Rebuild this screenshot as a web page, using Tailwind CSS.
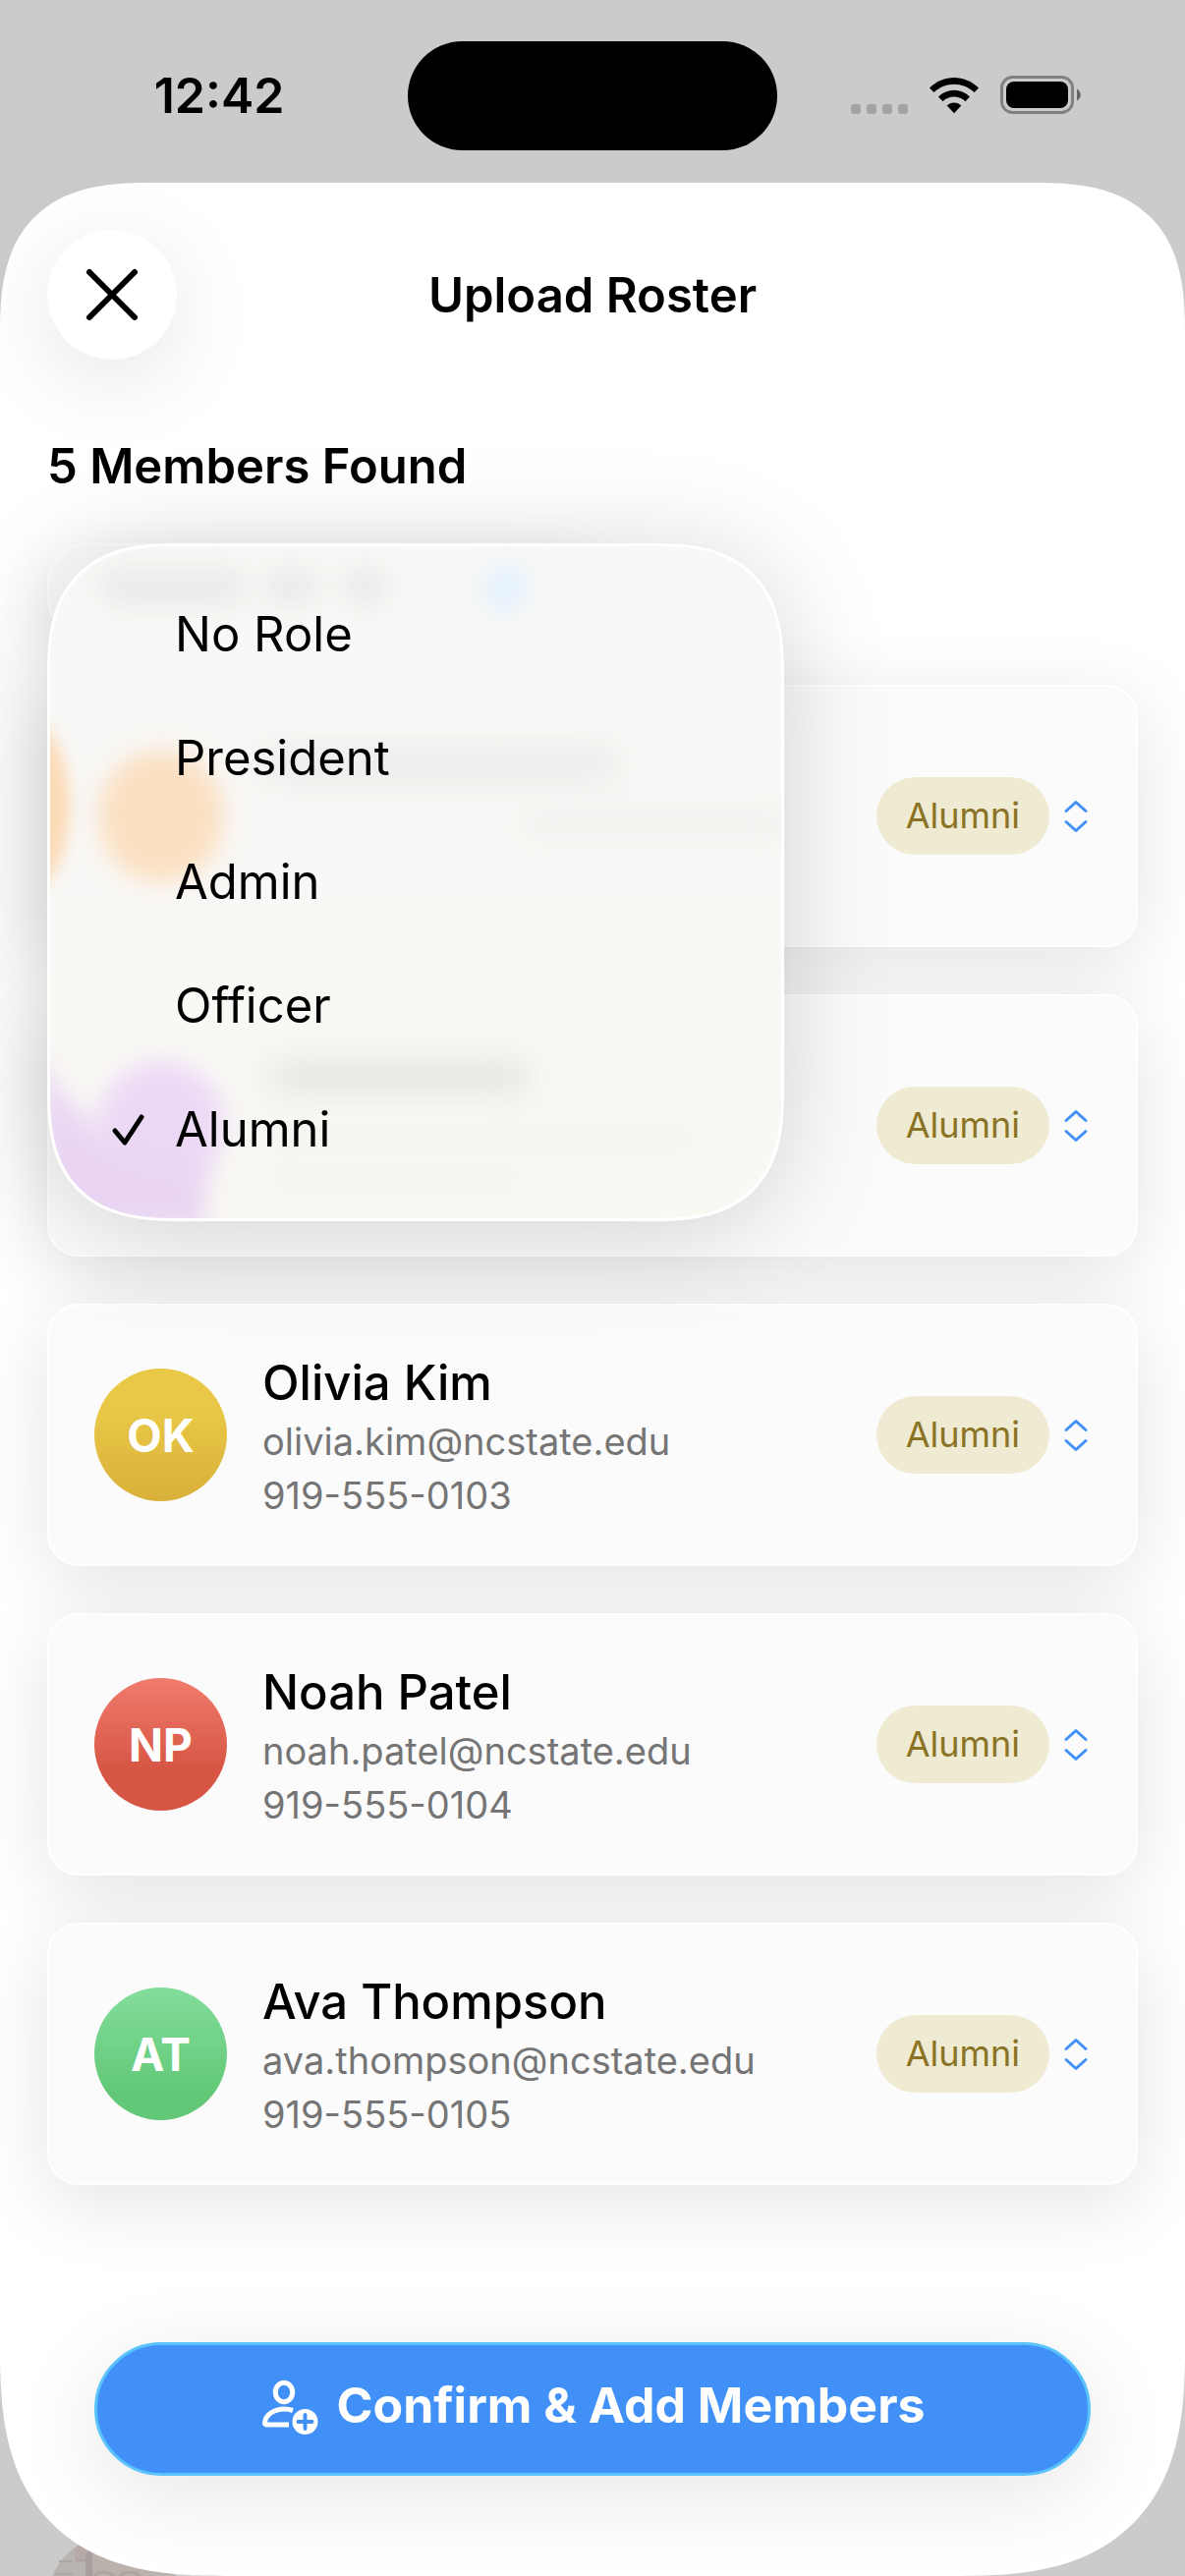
<!DOCTYPE html>
<html lang="en">
<head>
  <meta charset="UTF-8">
  <meta name="viewport" content="width=device-width, initial-scale=1.0">
  <title>Upload Roster</title>
  <script src="https://cdn.jsdelivr.net/npm/@tailwindcss/browser@4"></script>
</head>
<body class="bg-[#cbcbcb] font-['Inter',sans-serif] text-black">
  <div class="relative flex min-h-screen flex-col overflow-hidden">

    <!-- Page behind the sheet -->
    <svg class="absolute bottom-0 left-[48px] w-[136px] h-[36px]" viewBox="0 0 136 36" aria-hidden="true">
      <circle cx="68" cy="62" r="68" fill="#b9b4b0"/>
      <path d="M28 8L44 0V22H28z" fill="#b8aaa6"/>
      <path d="M12 21h14M8 34h18M28 20h14" stroke="#aaa7a4" stroke-width="2"/>
      <path d="M39 36V14L48 4V36Z" fill="#a5a09d"/>
      <path d="M46 36V8H104V36z" fill="#bbb1ac"/>
      <path d="M48 36c4-5 14-5 20 0M74 36c4-5 14-5 20 0" fill="none" stroke="#aea49f" stroke-width="3"/>
    </svg>

    <!-- Status bar -->
    <div class="grid h-[186px] shrink-0 grid-cols-3 items-center px-[36px] pt-[8px]">
      <div class="flex justify-center pr-[4px] text-[50px] leading-[60px] font-semibold">12:42</div>
      <div class="flex justify-center"><div class="h-[111px] w-[376px] shrink-0 rounded-full bg-black"></div></div>
      <div class="flex items-center justify-end gap-[21px] pr-[68px]">
        <svg class="h-[40px] w-[58px]" viewBox="0 0 58 40" fill="#a3a3a3" aria-hidden="true">
          <rect x="0" y="29" width="10" height="10" rx="3"/>
          <rect x="16" y="29" width="10" height="10" rx="3"/>
          <rect x="32" y="29" width="10" height="10" rx="3"/>
          <rect x="48" y="29" width="10" height="10" rx="3"/>
        </svg>
        <svg class="h-[40px] w-[52px]" viewBox="0 0 52 40" aria-hidden="true">
          <path d="M1 12.500C15-1.500 37-1.500 51 12.500L46.500 17C35 6 17 6 5.500 17Z"/>
          <path d="M10 21.500C19 12.500 33 12.500 42 21.500L37.500 26.200C31 20 21 20 14.500 26.200Z"/>
          <path d="M18.700 30.500C22.500 26.500 29.500 26.500 33.300 30.500L26 38.300Z"/>
        </svg>
        <svg class="h-[40px] w-[84px]" viewBox="0 0 84 40" aria-hidden="true">
          <rect x="1.500" y="1.500" width="72" height="36" rx="11" fill="none" stroke="#808080" stroke-width="3"/>
          <rect x="6" y="6" width="63" height="27" rx="8"/>
          <path d="M78 13.500C83 16 83 23 78 25.500Z" fill="#666"/>
        </svg>
      </div>
    </div>

    <!-- Sheet -->
    <main class="relative flex grow flex-col rounded-t-[152px] rounded-b-[230px] bg-white px-[48px] pt-[48px] [corner-shape:superellipse(1.4)]">
      <header class="grid grid-cols-[132px_1fr_132px] items-center">
        <button type="button" aria-label="Close" class="flex size-[132px] items-center justify-center rounded-full bg-white shadow-[0_20px_90px_rgba(0,0,0,0.1)]">
          <svg class="size-[56px]" viewBox="0 0 56 56" fill="none" stroke="black" stroke-width="6" stroke-linecap="round" aria-hidden="true">
            <path d="M5 5L51 51M51 5L5 51"/>
          </svg>
        </button>
        <h1 class="pt-[2px] text-center text-[49px] leading-[60px] font-semibold">Upload Roster</h1>
      </header>

      <h2 class="mt-[79px] text-[49px] leading-[60px] font-semibold">5 Members Found</h2>

      <!-- Bulk role picker with its open menu -->
      <section class="relative z-10 mt-[48px] h-[96px]">
        <div class="h-[96px] w-[560px] rounded-[40px] border-2 border-white bg-[#fbfbfb] shadow-[0_16px_60px_rgba(0,0,0,0.08)]"></div>
        <div class="absolute top-0 left-0 w-[750px] overflow-hidden rounded-[134px] border-3 border-white bg-[#f9f8f6] py-[27px] shadow-[0_10px_110px_rgba(0,0,0,0.17)] [corner-shape:superellipse(1.4)]">
          <!-- Frosted content under the menu -->
          <div class="absolute inset-0 bg-linear-to-b from-[#f8f8f6] via-[#f9f8f6] to-[#f9f8f3]" aria-hidden="true">
            <div class="absolute top-[20px] left-[50px] h-[42px] w-[150px] rounded-full bg-[#ebebea] blur-md"></div>
            <div class="absolute top-[20px] left-[215px] h-[42px] w-[60px] rounded-full bg-[#ebebea] blur-md"></div>
            <div class="absolute top-[20px] left-[295px] h-[42px] w-[50px] rounded-full bg-[#ebebea] blur-md"></div>
            <div class="absolute top-[18px] left-[440px] h-[50px] w-[46px] rounded-full bg-[#e4f1fd] blur-md"></div>
            <div class="absolute top-[205px] left-[210px] h-[34px] w-[370px] rounded-full bg-[#ebeae9] blur-lg"></div>
            <div class="absolute top-[270px] left-[480px] h-[26px] w-[270px] rounded-full bg-[#f1f0ee] blur-md"></div>
            <div class="absolute top-[523px] left-[220px] h-[34px] w-[270px] rounded-full bg-[#e6e5e3] blur-lg"></div>
            <div class="absolute top-[590px] left-[220px] h-[26px] w-[440px] rounded-full bg-[#f5f4f0] blur-md"></div>
            <div class="absolute top-[634px] left-[220px] h-[26px] w-[260px] rounded-full bg-[#f5f4f0] blur-md"></div>
            <div class="absolute top-[208px] left-[50px] h-[134px] w-[126px] rounded-full bg-[#fbdfc1] blur-md"></div>
            <div class="absolute top-[174px] left-[-76px] h-[180px] w-[96px] rounded-[50%] bg-[#fbdab5] blur-sm"></div>
            <div class="absolute top-[524px] left-[48px] h-[130px] w-[130px] rounded-full bg-[#ecd9f6] blur-md"></div>
            <svg class="absolute bottom-0 left-0 h-[170px] w-[180px] overflow-visible blur-md" viewBox="0 0 180 170">
              <path d="M-10 0C10 50 50 105 158 112V180H-10Z" fill="#e9d5f3"/>
            </svg>
          </div>
          <ul role="menu" class="relative">
            <li><button type="button" role="menuitemradio" aria-checked="false" class="flex h-[126px] w-full items-center pl-[127px] text-left text-[49px] leading-[60px]">No Role</button></li>
            <li><button type="button" role="menuitemradio" aria-checked="false" class="flex h-[126px] w-full items-center pl-[127px] text-left text-[49px] leading-[60px]">President</button></li>
            <li><button type="button" role="menuitemradio" aria-checked="false" class="flex h-[126px] w-full items-center pl-[127px] text-left text-[49px] leading-[60px]">Admin</button></li>
            <li><button type="button" role="menuitemradio" aria-checked="false" class="flex h-[126px] w-full items-center pl-[127px] text-left text-[49px] leading-[60px]">Officer</button></li>
            <li><button type="button" role="menuitemradio" aria-checked="true" class="flex h-[126px] w-full items-center gap-[30px] pl-[62px] text-left text-[49px] leading-[60px]">
              <svg class="h-[36px] w-[35px]" viewBox="0 0 35 36" fill="none" stroke="black" stroke-width="5" stroke-linecap="round" stroke-linejoin="round" aria-hidden="true"><path d="M4 19L14 31L31 5"/></svg>
              Alumni</button></li>
          </ul>
        </div>
      </section>

      <!-- Members -->
      <ul id="members" class="mt-[48px] flex flex-col gap-[48px]"></ul>

      <button type="button" class="mx-[48px] mt-[160px] mb-[102px] flex h-[136px] items-center justify-center gap-[18px] rounded-full border-3 border-[#5bc3fb] bg-[#4090f7] pb-[8px] text-[50px] leading-[60px] font-bold text-white shadow-[0_20px_90px_rgba(0,0,0,0.1)]">
        <svg class="h-[60px] w-[60px]" viewBox="0 0 60 60" fill="none" stroke="white" stroke-width="5" stroke-linejoin="round" aria-hidden="true">
          <ellipse cx="24" cy="17" rx="8.700" ry="9.700"/>
          <path d="M33 35.500C20 31.500 6 37 4.500 47.500C4.300 49.500 5 50 7 50H29"/>
          <circle cx="45.500" cy="47" r="13" fill="white" stroke="none"/>
          <path d="M45.500 40V54M38.500 47H52.500" stroke="#4090f7" stroke-width="4" stroke-linecap="round"/>
        </svg>
        Confirm &amp; Add Members
      </button>
    </main>
  </div>

  <script>
    // The first two rows are under the open menu
    const members = [
      {},
      {},
      { name: 'Olivia Kim', initials: 'OK', email: 'olivia.kim@ncstate.edu', phone: '919-555-0103', color: 'from-[#e9c847] from-30% to-[#d9b03a]' },
      { name: 'Noah Patel', initials: 'NP', email: 'noah.patel@ncstate.edu', phone: '919-555-0104', color: 'from-[#f07b6c] to-[#d75543] to-70%' },
      { name: 'Ava Thompson', initials: 'AT', email: 'ava.thompson@ncstate.edu', phone: '919-555-0105', color: 'from-[#83dd9b] to-[#62c877] to-80%' },
    ];

    const list = document.getElementById('members');
    members.forEach(member => {
      const row = document.createElement('li');
      row.className = 'flex h-[267px] items-center rounded-[32px] border-2 border-white bg-[#fbfbfb] px-[46px] shadow-[0_18px_80px_rgba(0,0,0,0.11)]';
      row.innerHTML = `
        ${member.name ? `
        <div class="flex size-[135px] shrink-0 items-center justify-center rounded-full bg-linear-to-b ${member.color} text-[46px] leading-[56px] font-bold text-white">${member.initials}</div>
        <div class="ml-[36px] pt-[6px]">
          <h3 class="pb-[2px] text-[49px] leading-[60px] font-medium">${member.name}</h3>
          <p class="text-[38px] leading-[55px] text-[#757575]">${member.email}</p>
          <p class="text-[38px] leading-[55px] text-[#757575]">${member.phone}</p>
        </div>` : ''}
        <button type="button" aria-haspopup="menu" class="ml-auto flex items-center gap-[12px]">
          <span class="rounded-full bg-[#efead2] px-[30px] py-[16px] text-[36px] leading-[47px] text-[#8a7325]">Alumni</span>
          <svg class="h-[40px] w-[30px]" viewBox="0 0 30 40" fill="none" stroke="#4090f7" stroke-width="3" stroke-linecap="round" stroke-linejoin="round" aria-hidden="true">
            <path d="M5 14.500L15 5.500L25 14.500M5 25.500L15 34.500L25 25.500"/>
          </svg>
        </button>`;
      list.appendChild(row);
    });
  </script>
</body>
</html>
